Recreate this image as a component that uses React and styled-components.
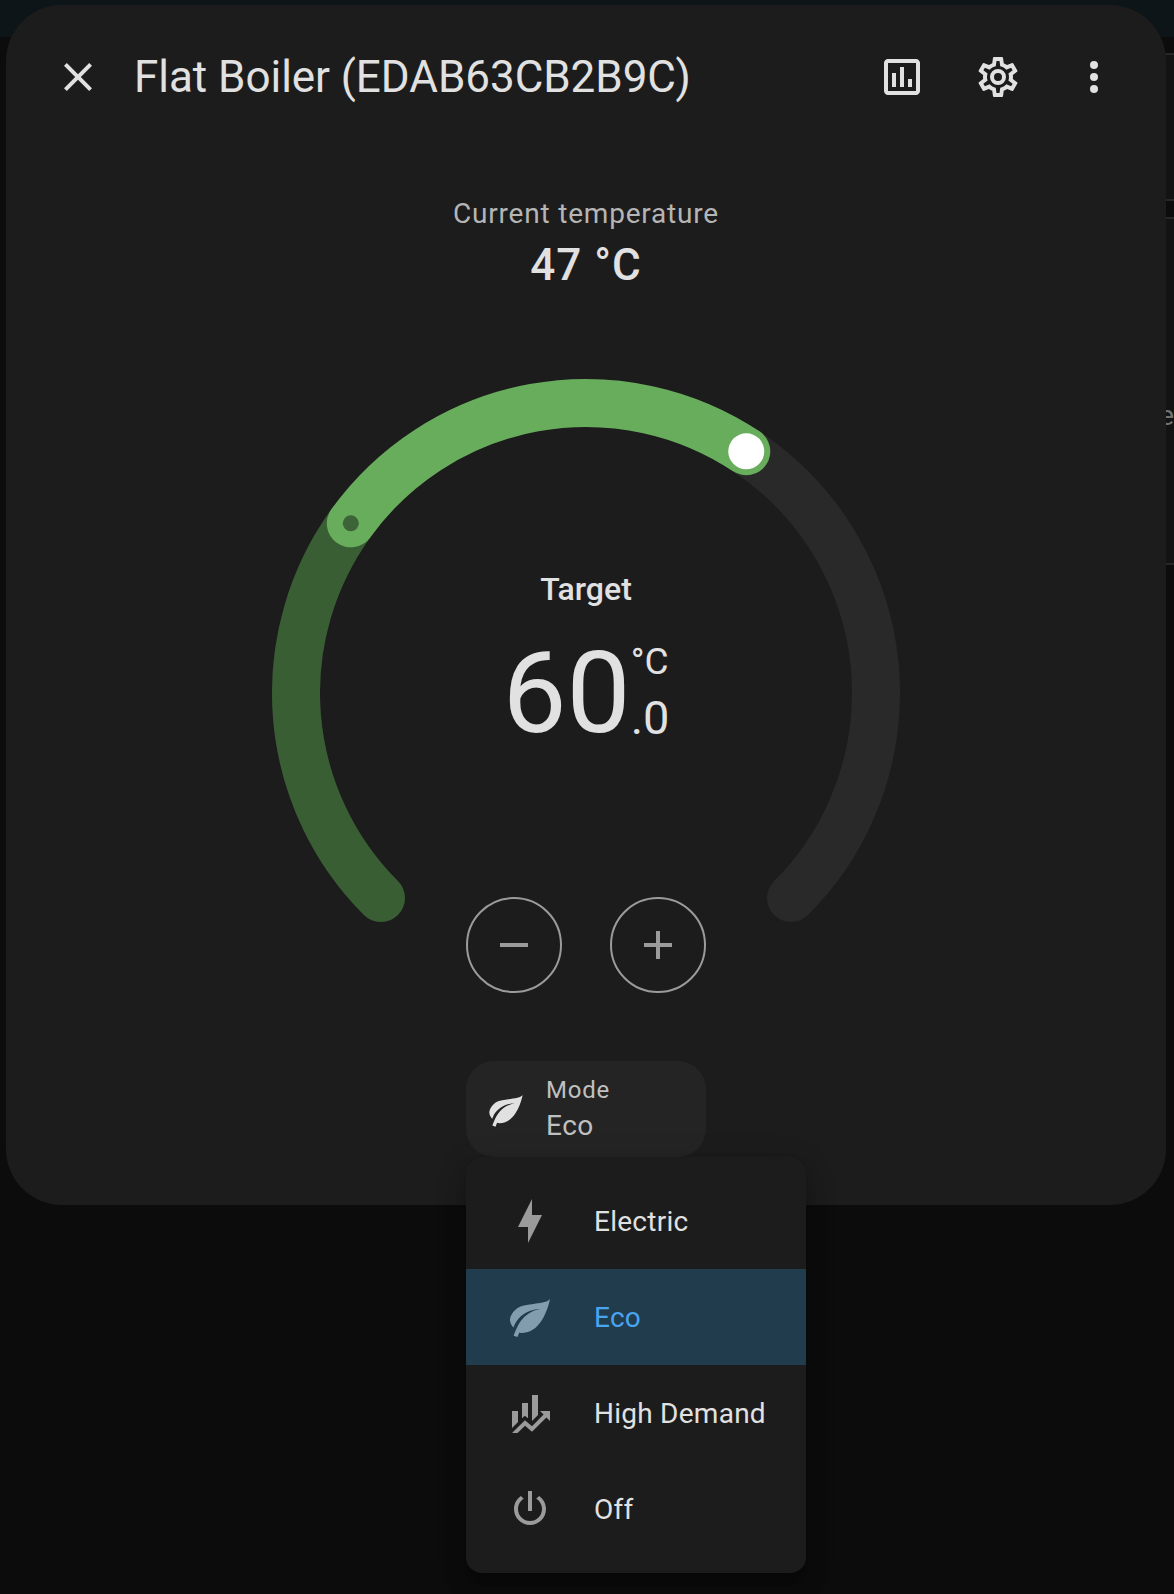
import React from "react";
import styled, { createGlobalStyle, css } from "styled-components";

const GlobalStyle = createGlobalStyle`
  *, *::before, *::after { box-sizing: border-box; }
  html, body { margin: 0; padding: 0; background: #0c0c0c; }
  body { font-family: Roboto, "Noto Sans", sans-serif; overflow: hidden; }
  button { font: inherit; color: inherit; background: none; border: 0; padding: 0; margin: 0; cursor: pointer; }
`;

const icons = {
  close:
    "M19,6.41L17.59,5L12,10.59L6.41,5L5,6.41L10.59,12L5,17.59L6.41,19L12,13.41L17.59,19L19,17.59L13.41,12L19,6.41Z",
  chart:
    "M9 17H7V10H9V17M13 17H11V7H13V17M17 17H15V13H17V17M19 19H5V5H19V19.1M19 3H5C3.9 3 3 3.9 3 5V19C3 20.1 3.9 21 5 21H19C20.1 21 21 20.1 21 19V5C21 3.9 20.1 3 19 3Z",
  cog:
    "M12,8A4,4 0 0,1 16,12A4,4 0 0,1 12,16A4,4 0 0,1 8,12A4,4 0 0,1 12,8M12,10A2,2 0 0,0 10,12A2,2 0 0,0 12,14A2,2 0 0,0 14,12A2,2 0 0,0 12,10M10,22C9.75,22 9.54,21.82 9.5,21.58L9.13,18.93C8.5,18.68 7.96,18.34 7.44,17.94L4.95,18.95C4.73,19.03 4.46,18.95 4.34,18.73L2.34,15.27C2.21,15.05 2.27,14.78 2.46,14.63L4.57,12.97L4.5,12L4.57,11L2.46,9.37C2.27,9.22 2.21,8.95 2.34,8.73L4.34,5.27C4.46,5.05 4.73,4.96 4.95,5.05L7.44,6.05C7.96,5.66 8.5,5.32 9.13,5.07L9.5,2.42C9.54,2.18 9.75,2 10,2H14C14.25,2 14.46,2.18 14.5,2.42L14.87,5.07C15.5,5.32 16.04,5.66 16.56,6.05L19.05,5.05C19.27,4.96 19.54,5.05 19.66,5.27L21.66,8.73C21.79,8.95 21.73,9.22 21.54,9.37L19.43,11L19.5,12L19.43,13L21.54,14.63C21.73,14.78 21.79,15.05 21.66,15.27L19.66,18.73C19.54,18.95 19.27,19.04 19.05,18.95L16.56,17.95C16.04,18.34 15.5,18.68 14.87,18.93L14.5,21.58C14.46,21.82 14.25,22 14,22H10M11.25,4L10.88,6.61C9.68,6.86 8.62,7.5 7.85,8.39L5.44,7.35L4.69,8.65L6.8,10.2C6.4,11.37 6.4,12.64 6.8,13.8L4.68,15.36L5.43,16.66L7.86,15.62C8.63,16.5 9.68,17.14 10.87,17.38L11.24,20H12.76L13.13,17.39C14.32,17.14 15.37,16.5 16.14,15.62L18.57,16.66L19.32,15.36L17.2,13.81C17.6,12.64 17.6,11.37 17.2,10.2L19.31,8.65L18.56,7.35L16.15,8.39C15.38,7.5 14.32,6.86 13.12,6.62L12.75,4H11.25Z",
  dots:
    "M12,16A2,2 0 0,1 14,18A2,2 0 0,1 12,20A2,2 0 0,1 10,18A2,2 0 0,1 12,16M12,10A2,2 0 0,1 14,12A2,2 0 0,1 12,14A2,2 0 0,1 10,12A2,2 0 0,1 12,10M12,4A2,2 0 0,1 14,6A2,2 0 0,1 12,8A2,2 0 0,1 10,6A2,2 0 0,1 12,4Z",
  minus: "M19,13H5V11H19V13Z",
  plus: "M19,13H13V19H11V13H5V11H11V5H13V11H19V13Z",
  bolt: "M11 15H6L13 1V9H18L11 23V15Z",
  leaf:
    "M17,8C8,10 5.9,16.17 3.82,21.34L5.71,22L6.66,19.7C7.14,19.87 7.64,20 8,20C19,20 22,3 22,3C21,5 14,5.25 9,6.25C4,7.25 2,11.5 2,13.5C2,15.5 3.75,17.25 3.75,17.25C7,8 17,8 17,8Z",
  finance:
    "M6,16.5L3,19.44V11H6M11,14.66L9.43,13.32L8,14.64V7H11M16,13L13,16V3H16M18.81,12.81L17,11H22V16L20.21,14.21L13,21.36L9.53,18.34L5.75,22H3L9.47,15.66L13,18.64",
  power:
    "M16.56,5.44L15.11,6.89C16.84,7.94 18,9.83 18,12A6,6 0 0,1 12,18A6,6 0 0,1 6,12C6,9.83 7.16,7.94 8.88,6.88L7.44,5.44C5.36,6.88 4,9.28 4,12A8,8 0 0,0 12,20A8,8 0 0,0 20,12C20,9.28 18.64,6.88 16.56,5.44M13,3H11V13H13",
};

const IconSvg = styled.svg`
  display: block;
  flex: none;
  width: ${(p) => p.$size}px;
  height: ${(p) => p.$size}px;
  fill: currentColor;
`;

const Icon = ({ name, size = 48 }) => (
  <IconSvg $size={size} viewBox="0 0 24 24" aria-hidden="true">
    <path d={icons[name]} />
  </IconSvg>
);

/* Dashboard behind the dialog */

const Page = styled.div`
  position: relative;
  width: 1174px;
  height: 1594px;
  overflow: hidden;
  background: #0c0c0c;
`;

const AppBar = styled.div`
  height: 37px;
  background: #0d1519;
`;

const CardColumn = styled.div`
  display: flex;
  flex-direction: column;
  align-items: flex-end;
  gap: 16px;
  padding-top: 16px;
`;

const BackCard = styled.div`
  width: 24px;
  height: ${(p) => p.$height}px;
  padding-top: ${(p) => p.$offset || 0}px;
  border: solid #272727;
  border-width: 2px 0;
  background: #131313;
  color: #727272;
  font-size: 28px;
  line-height: 40px;
  text-align: right;
`;

/* Dialog */

const Dialog = styled.section`
  position: absolute;
  top: 5px;
  left: 6px;
  width: 1160px;
  height: 1200px;
  border-radius: 56px;
  background: #1c1c1c;
  color: #e1e1e1;
`;

const Header = styled.header`
  display: flex;
  align-items: center;
  height: 144px;
  padding: 0 24px;
`;

const IconButton = styled.button`
  display: grid;
  place-items: center;
  width: 96px;
  height: 96px;
  flex: none;
  ${(p) =>
    p.$outlined &&
    css`
      border: 2px solid #9b9b9b;
      border-radius: 50%;
      color: #9b9b9b;
    `}
`;

const Title = styled.h1`
  flex: 1;
  margin: 0;
  padding-left: 8px;
  font-size: 44px;
  font-weight: 400;
  line-height: 56px;
  letter-spacing: -0.04px;
  white-space: nowrap;
`;

const Content = styled.div`
  display: flex;
  flex-direction: column;
  align-items: center;
  padding-top: 45px;
`;

const CurrentLabel = styled.p`
  margin: 0 0 3px;
  color: #b5b5b5;
  font-size: 28px;
  line-height: 40px;
  letter-spacing: 0.8px;
`;

const CurrentValue = styled.p`
  margin: 0 0 80px;
  font-size: 44px;
  font-weight: 500;
  line-height: 56px;
  letter-spacing: 1px;
`;

const Dial = styled.div`
  display: grid;
  width: 640px;
  height: 640px;

  > * {
    grid-area: 1 / 1;
  }
`;

const DialSvg = styled.svg`
  width: 640px;
  height: 640px;
  fill: none;
  stroke-linecap: round;
`;

const DialInfo = styled.div`
  display: flex;
  flex-direction: column;
  align-items: center;
  padding-top: 196px;
`;

const TargetLabel = styled.p`
  margin: 0 0 28px;
  font-size: 32px;
  font-weight: 500;
  line-height: 40px;
`;

const BigNumber = styled.div`
  display: flex;
  height: 112px;
  margin-bottom: 148px;
  font-size: 114px;
  line-height: 112px;
`;

const NumberSide = styled.div`
  display: flex;
  flex-direction: column;
  gap: 14px;
  padding-top: 6px;
`;

const Unit = styled.span`
  font-size: 37px;
  line-height: 37px;
`;

const Decimal = styled.span`
  font-size: 47px;
  line-height: 47px;
`;

const StepButtons = styled.div`
  display: flex;
  gap: 48px;
`;

const ModeSelect = styled.div`
  position: relative;
  width: 240px;
  margin-top: 48px;
`;

const ModeButton = styled.button`
  display: flex;
  align-items: center;
  gap: 20px;
  width: 240px;
  height: 96px;
  padding: 2px 20px 0;
  border-radius: 28px;
  background: #242424;
  text-align: left;
`;

const ModeText = styled.span`
  display: flex;
  flex-direction: column;
  color: #c0c0c0;
`;

const ModeLabel = styled.span`
  font-size: 24px;
  line-height: 32px;
  letter-spacing: 0.8px;
`;

const ModeValue = styled.span`
  font-size: 28px;
  line-height: 40px;
  letter-spacing: 0.5px;
`;

const Menu = styled.ul`
  position: absolute;
  top: 96px;
  left: 0;
  width: 340px;
  margin: 0;
  padding: 16px 0;
  list-style: none;
  border-radius: 16px;
  background: #1c1c1c;
  box-shadow:
    0 10px 10px -6px rgba(0, 0, 0, 0.2),
    0 16px 20px 2px rgba(0, 0, 0, 0.14),
    0 6px 28px 4px rgba(0, 0, 0, 0.12);
`;

const MenuItem = styled.li`
  display: flex;
  align-items: center;
  gap: 40px;
  height: 96px;
  padding: 0 40px;
  background: ${(p) => (p.$selected ? "#213c4d" : "transparent")};
  color: ${(p) => (p.$selected ? "#4aa4f0" : "#e1e1e1")};
  font-size: 28px;
  letter-spacing: 0.25px;
  white-space: nowrap;

  svg {
    color: ${(p) => (p.$selected ? "#819dae" : "#9b9b9b")};
  }
`;

const RADIUS = 290;
const START = 135;
const SWEEP = 270;
const MIN = 35;
const MAX = 75;

const toAngle = (value) =>
  START - 0.2 + ((value - MIN) / (MAX - MIN)) * SWEEP;

const pointAt = (angle) => {
  const rad = (angle * Math.PI) / 180;
  return [320 + RADIUS * Math.cos(rad), 320 + RADIUS * Math.sin(rad)];
};

const arcPath = (from, to) => {
  const [x1, y1] = pointAt(from);
  const [x2, y2] = pointAt(to);
  return `M${x1} ${y1}A${RADIUS} ${RADIUS} 0 ${to - from > 180 ? 1 : 0} 1 ${x2} ${y2}`;
};

const TemperatureArc = ({ current, target }) => {
  const [cx, cy] = pointAt(toAngle(current));
  const [tx, ty] = pointAt(toAngle(target));
  return (
    <DialSvg viewBox="0 0 640 640" strokeWidth="48">
      <path d={arcPath(START, START + SWEEP)} stroke="#292929" />
      <path d={arcPath(START, toAngle(current))} stroke="#3a5e34" />
      <path d={arcPath(toAngle(current), toAngle(target))} stroke="#68ad5c" />
      <circle cx={cx} cy={cy} r="8" fill="#3d6338" stroke="none" />
      <circle cx={tx} cy={ty} r="18" fill="#fff" stroke="none" />
    </DialSvg>
  );
};

const modes = [
  { icon: "bolt", label: "Electric" },
  { icon: "leaf", label: "Eco" },
  { icon: "finance", label: "High Demand" },
  { icon: "power", label: "Off" },
];

export default function App() {
  const mode = "Eco";
  return (
    <Page>
      <GlobalStyle />
      <AppBar />
      <CardColumn>
        <BackCard $height={148} />
        <BackCard $height={348} $offset={177}>e</BackCard>
      </CardColumn>
      <Dialog role="dialog">
        <Header>
          <IconButton aria-label="Close">
            <Icon name="close" />
          </IconButton>
          <Title>Flat Boiler (EDAB63CB2B9C)</Title>
          <IconButton aria-label="History">
            <Icon name="chart" />
          </IconButton>
          <IconButton aria-label="Settings">
            <Icon name="cog" />
          </IconButton>
          <IconButton aria-label="More">
            <Icon name="dots" />
          </IconButton>
        </Header>
        <Content>
          <CurrentLabel>Current temperature</CurrentLabel>
          <CurrentValue>47 °C</CurrentValue>
          <Dial>
            <TemperatureArc current={47} target={60} />
            <DialInfo>
              <TargetLabel>Target</TargetLabel>
              <BigNumber>
                <span>60</span>
                <NumberSide>
                  <Unit>°C</Unit>
                  <Decimal>.0</Decimal>
                </NumberSide>
              </BigNumber>
              <StepButtons>
                <IconButton $outlined aria-label="Decrease">
                  <Icon name="minus" />
                </IconButton>
                <IconButton $outlined aria-label="Increase">
                  <Icon name="plus" />
                </IconButton>
              </StepButtons>
            </DialInfo>
          </Dial>
          <ModeSelect>
            <ModeButton>
              <Icon name="leaf" size={40} />
              <ModeText>
                <ModeLabel>Mode</ModeLabel>
                <ModeValue>{mode}</ModeValue>
              </ModeText>
            </ModeButton>
            <Menu>
              {modes.map(({ icon, label }) => (
                <MenuItem key={label} $selected={label === mode}>
                  <Icon name={icon} />
                  {label}
                </MenuItem>
              ))}
            </Menu>
          </ModeSelect>
        </Content>
      </Dialog>
    </Page>
  );
}
